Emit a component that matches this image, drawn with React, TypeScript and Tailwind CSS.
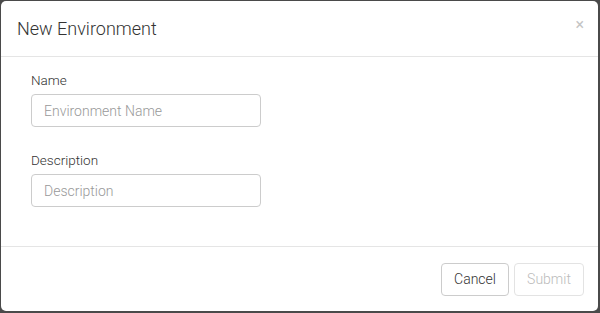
import React from "react";

export default function App() {
    return (
        <div className="w-[600px] h-[313px] bg-[#4a4a4a] pt-px pl-px" style={{ fontFamily: '"Roboto", "Liberation Sans", sans-serif' }}>
            <div className="w-[597px] h-[310px] bg-white rounded-[5px] flex flex-col">
                {/* Header */}
                <div className="h-[56px] flex items-center justify-between pl-[16px] pr-[14px] border-b border-[#e5e5e5]">
                    <h2 className="text-[18px] font-light text-[#333]">New Environment</h2>
                    <span className="text-[16px] text-[#c4c4c4] leading-none -mt-[7px]">×</span>
                </div>

                {/* Body */}
                <div className="flex-1 pl-[30px] pt-[14px]">
                    <label className="block text-[13.5px] font-light text-[#333] leading-[18px]">Name</label>
                    <input
                        placeholder="Environment Name"
                        className="mt-[5px] w-[230px] h-[33px] border border-[#ccc] rounded-[4px] px-[12px] text-[14px] font-light text-[#333] placeholder:text-[#999] outline-none"
                    />
                    <label className="block mt-[24px] text-[13.5px] font-light text-[#333] leading-[18px]">Description</label>
                    <input
                        placeholder="Description"
                        className="mt-[5px] w-[230px] h-[33px] border border-[#ccc] rounded-[4px] px-[12px] text-[14px] font-light text-[#333] placeholder:text-[#999] outline-none"
                    />
                </div>

                {/* Footer */}
                <div className="h-[65px] border-t border-[#e5e5e5] flex items-center justify-end gap-[5px] pr-[14px]">
                    <button className="h-[33px] w-[68px] border border-[#ccc] rounded-[4px] text-[14px] font-light text-[#333] bg-white">Cancel</button>
                    <button disabled className="h-[33px] w-[70px] border border-[#e3e3e3] rounded-[4px] text-[14px] font-light text-[#bbb] bg-white">Submit</button>
                </div>
            </div>
        </div>
    );
}
